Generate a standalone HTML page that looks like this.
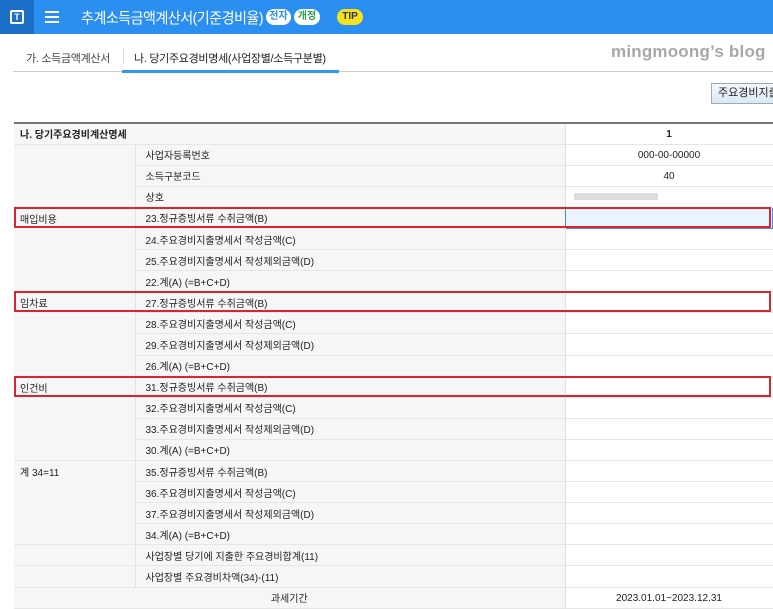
<!DOCTYPE html>
<html><head><meta charset="utf-8"><style>
*{margin:0;padding:0;box-sizing:border-box}
body{width:773px;height:609px;overflow:hidden;background:#fff;font-family:"Liberation Sans","Noto Sans CJK KR",sans-serif;position:relative}
.hdr{position:absolute;left:0;top:0;width:773px;height:34px;background:#2a8ff0}
.sq{position:absolute;left:0;top:0;width:34px;height:34px;background:#1c6fc6}
.sq div{position:absolute;left:10px;top:10px;width:14px;height:14px;border:2px solid #fff;border-radius:2px;color:#fff;font-size:9px;font-weight:bold;text-align:center;line-height:10px}
.ham{position:absolute;left:45px;top:11px;width:14px;height:12px;border-top:2px solid #fff;border-bottom:2px solid #fff}
.ham:after{content:"";position:absolute;left:0;top:3px;width:14px;height:2px;background:#fff}
.title{position:absolute;left:81px;top:7px;color:#fff;font-size:15px;letter-spacing:-0.6px;transform:scaleX(0.94);transform-origin:left;white-space:nowrap}
.pill{position:absolute;top:9px;height:16px;border-radius:8px;background:#fff;font-size:10px;font-weight:bold;line-height:16px;text-align:center}
.tabs{position:absolute;left:13px;top:71px;width:760px;border-top:1px solid #ccc}
.tab{position:absolute;font-size:11px;color:#444;letter-spacing:-0.3px}
.blog{position:absolute;left:611px;top:42px;font-size:17px;font-weight:bold;color:#a8a8a8;letter-spacing:.2px}
.btn{position:absolute;left:711px;top:83px;width:70px;height:21px;border:1px solid #9ab;background:linear-gradient(#f4f8fc,#dde8f3);font-size:11px;line-height:19px;padding-left:6px;color:#222}
table{position:absolute;left:14px;top:122px;width:759px;border-collapse:collapse;border-top:2px solid #777;font-size:10px;color:#222}
td{height:21.1px;border-bottom:1px solid #e6e6e6;padding:0 6px;white-space:nowrap}
td.a{width:121px;background:#f6f6f6}
td.a.t{vertical-align:top;padding-top:3px}
td.b{width:430px;background:#f6f6f6;border-left:1px solid #e2e2e2;padding-left:10px}
td.c{background:#fff;border-left:1px solid #e2e2e2;text-align:center;padding-top:2px}
.red{position:absolute;left:14px;width:757px;height:21px;border:2px solid #d8262f}
</style></head><body>
<div class="hdr"><div class="sq"><div>T</div></div><div class="ham"></div>
<div class="title">추계소득금액계산서(기준경비율)</div>
<div class="pill" style="left:266px;width:25px;color:#2a8ff0">전자</div>
<div class="pill" style="left:294px;width:26px;color:#2e9a4a">개정</div>
<div class="pill" style="left:337px;width:26px;background:#f6e11e;color:#333">TIP</div>
</div>
<div class="tab" style="left:26px;top:50px">가. 소득금액계산서</div>
<div style="position:absolute;left:123px;top:48px;width:1px;height:16px;background:#ddd"></div>
<div class="tab" style="left:134px;top:50px;color:#222">나. 당기주요경비명세(사업장별/소득구분별)</div>
<div class="tabs"></div>
<div style="position:absolute;left:122px;top:70px;width:217px;height:3px;background:#2a9be8"></div>
<div class="blog">mingmoong’s blog</div>
<div class="btn">주요경비지출</div>
<table>
<tr><td colspan="2" style="background:#f6f6f6;font-weight:bold">나. 당기주요경비계산명세</td><td class="c" style="font-weight:bold">1</td></tr>
<tr><td class="a" rowspan="3"></td><td class="b">사업자등록번호</td><td class="c">000-00-00000</td></tr>
<tr><td class="b">소득구분코드</td><td class="c">40</td></tr>
<tr><td class="b">상호</td><td class="c" style="text-align:left"><span style="display:inline-block;width:84px;height:7px;background:#ddd;margin-left:2px"></span></td></tr>
<tr><td class="a t" rowspan="4">매입비용</td><td class="b">23.정규증빙서류 수취금액(B)</td><td class="c" style="background:#e9f4fe;border:1px solid #4a8ed8"></td></tr>
<tr><td class="b">24.주요경비지출명세서 작성금액(C)</td><td class="c"></td></tr>
<tr><td class="b">25.주요경비지출명세서 작성제외금액(D)</td><td class="c"></td></tr>
<tr><td class="b">22.계(A) (=B+C+D)</td><td class="c"></td></tr>
<tr><td class="a t" rowspan="4">임차료</td><td class="b">27.정규증빙서류 수취금액(B)</td><td class="c"></td></tr>
<tr><td class="b">28.주요경비지출명세서 작성금액(C)</td><td class="c"></td></tr>
<tr><td class="b">29.주요경비지출명세서 작성제외금액(D)</td><td class="c"></td></tr>
<tr><td class="b">26.계(A) (=B+C+D)</td><td class="c"></td></tr>
<tr><td class="a t" rowspan="4">인건비</td><td class="b">31.정규증빙서류 수취금액(B)</td><td class="c"></td></tr>
<tr><td class="b">32.주요경비지출명세서 작성금액(C)</td><td class="c"></td></tr>
<tr><td class="b">33.주요경비지출명세서 작성제외금액(D)</td><td class="c"></td></tr>
<tr><td class="b">30.계(A) (=B+C+D)</td><td class="c"></td></tr>
<tr><td class="a t" rowspan="4">계 34=11</td><td class="b">35.정규증빙서류 수취금액(B)</td><td class="c"></td></tr>
<tr><td class="b">36.주요경비지출명세서 작성금액(C)</td><td class="c"></td></tr>
<tr><td class="b">37.주요경비지출명세서 작성제외금액(D)</td><td class="c"></td></tr>
<tr><td class="b">34.계(A) (=B+C+D)</td><td class="c"></td></tr>
<tr><td class="a"></td><td class="b">사업장별 당기에 지출한 주요경비합계(11)</td><td class="c"></td></tr>
<tr><td class="a"></td><td class="b">사업장별 주요경비차액(34)-(11)</td><td class="c"></td></tr>
<tr><td colspan="2" style="background:#f6f6f6;text-align:center">과세기간</td><td class="c">2023.01.01~2023.12.31</td></tr>
</table>
<div class="red" style="top:207px"></div>
<div class="red" style="top:291px"></div>
<div class="red" style="top:376px"></div>
</body></html>
